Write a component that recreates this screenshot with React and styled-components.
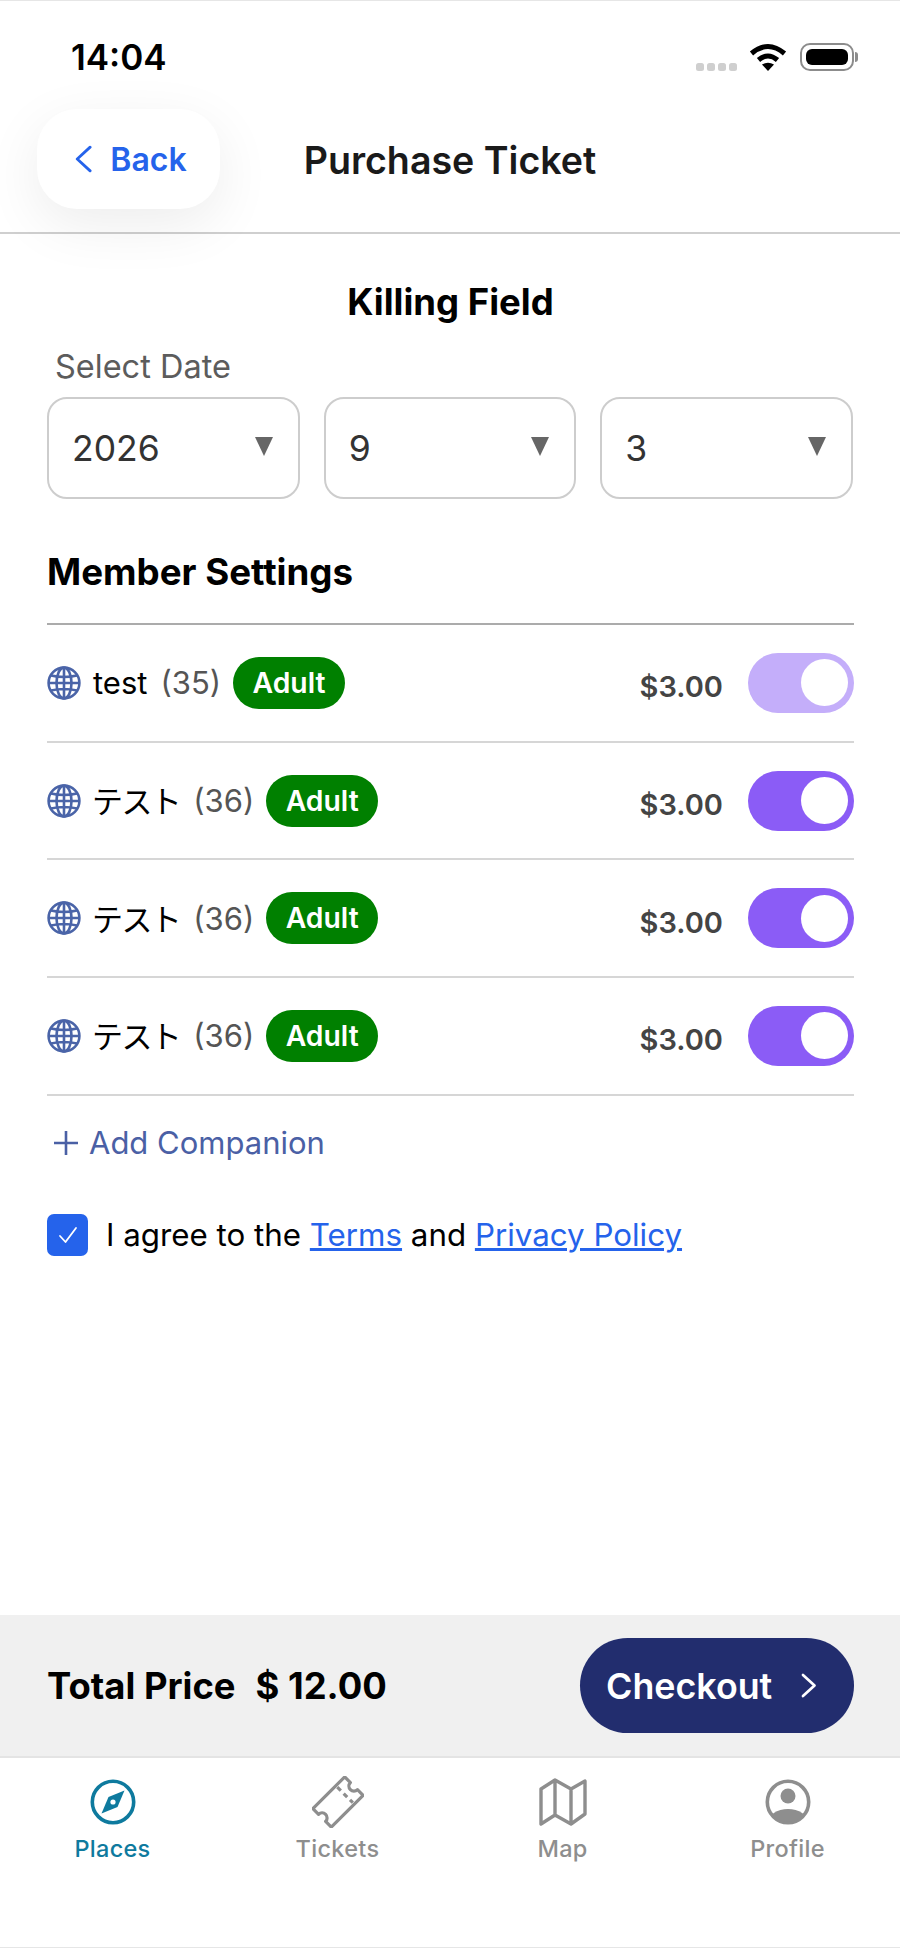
import React from "react";
import styled, { createGlobalStyle } from "styled-components";

const members = [
  { name: "test", age: 35, dimmed: true },
  { name: "テスト", age: 36, cjk: true },
  { name: "テスト", age: 36, cjk: true },
  { name: "テスト", age: 36, cjk: true },
];

const GlobalStyle = createGlobalStyle`
  * { box-sizing: border-box; }
  body {
    margin: 0;
    background: #fff;
    font-family: "Inter", "Noto Sans CJK JP", sans-serif;
  }
`;

const Screen = styled.div`
  width: 900px;
  height: 1948px;
  display: flex;
  flex-direction: column;
  background: #fff;
  border-top: 1px solid #e6e6e6;
  border-bottom: 1px solid #e6e6e6;
  overflow: hidden;
`;

// ---------- status bar ----------
const StatusBar = styled.div`
  height: 106px;
  flex-shrink: 0;
  display: flex;
  justify-content: space-between;
  padding: 36px 46px 0 71px;
`;
const Time = styled.div`
  font-size: 35px;
  line-height: 40px;
  font-weight: 600;
  color: #000;
`;
const StatusIcons = styled.div`
  display: flex;
  align-items: flex-start;
  padding-top: 6px;
`;
const Dots = styled.div`
  display: flex;
  gap: 3px;
  margin: 20px 12px 0 0;
`;
const Dot = styled.span`
  width: 8px;
  height: 8px;
  border-radius: 2.5px;
  background: #cfcfcf;
`;
const Battery = styled.div`
  position: relative;
  width: 54px;
  height: 28px;
  margin-left: 13px;
  padding: 4px;
  border: 2px solid #8c8c8c;
  border-radius: 10px;
  &::before {
    content: "";
    display: block;
    height: 100%;
    background: #000;
    border-radius: 6px;
  }
  &::after {
    content: "";
    position: absolute;
    right: -6px;
    top: 7px;
    width: 3px;
    height: 10px;
    background: #8c8c8c;
    border-radius: 0 3px 3px 0;
  }
`;

// ---------- header ----------
const Header = styled.header`
  height: 127px;
  flex-shrink: 0;
  display: grid;
  grid-template-columns: 1fr auto 1fr;
  align-items: start;
  padding: 2px 37px 0;
  border-bottom: 2px solid #cfcfcf;
`;
const BackButton = styled.div`
  width: 183px;
  height: 100px;
  display: flex;
  align-items: center;
  gap: 18px;
  padding-left: 38px;
  background: #fff;
  border-radius: 40px;
  box-shadow: 0 16px 56px rgba(0, 0, 0, 0.075);
  color: #2563eb;
  font-size: 32px;
  font-weight: 600;
`;
const Title = styled.h1`
  margin: 0;
  height: 100px;
  padding-top: 2px;
  display: flex;
  align-items: center;
  font-size: 37.6px;
  font-weight: 600;
  color: #1a1a1a;
`;

// ---------- form ----------
const Content = styled.main`
  flex: 1;
  padding: 46px 46px 0 47px;
`;
const PlaceName = styled.h2`
  margin: 0;
  text-align: center;
  font-size: 36.5px;
  line-height: 44px;
  font-weight: 700;
  color: #000;
`;
const FieldLabel = styled.div`
  margin: 23px 0 0 8px;
  font-size: 32.5px;
  line-height: 40px;
  color: #5c5c5c;
`;
const DateRow = styled.div`
  display: grid;
  grid-template-columns: repeat(3, 1fr);
  gap: 24px;
  margin-top: 10px;
  padding-right: 1px;
`;
const SelectBox = styled.div`
  height: 102px;
  display: flex;
  align-items: center;
  justify-content: space-between;
  padding: 0 25px 0 23px;
  border: 2px solid #cdcdcd;
  border-radius: 20px;
  font-size: 35.5px;
  color: #333;
`;
const SelectArrow = styled.span`
  width: 0;
  height: 0;
  border-left: 9px solid transparent;
  border-right: 9px solid transparent;
  border-top: 19px solid #666;
  margin-top: -3px;
`;
const SectionTitle = styled.h3`
  margin: 51px 0 0;
  padding-bottom: 29px;
  border-bottom: 2px solid #ababab;
  font-size: 36.7px;
  line-height: 44px;
  font-weight: 700;
  color: #000;
`;
const MemberRow = styled.div`
  height: 117.7px;
  display: flex;
  align-items: center;
  border-bottom: 2px solid #d6d6d6;
`;
const MemberInfo = styled.div`
  flex: 1;
  display: flex;
  align-items: center;
`;
const MemberName = styled.span`
  margin: ${(props) => (props.$cjk ? "-2px 0 0 11px" : "0 0 0 12px")};
  font-size: 31px;
  letter-spacing: ${(props) => (props.$cjk ? "-1.6px" : "0")};
  color: #000;
`;
const MemberAge = styled.span`
  margin-left: 13px;
  font-size: 31px;
  color: #555;
`;
const Badge = styled.span`
  margin-left: 12px;
  height: 52px;
  padding: 0 19.5px;
  display: flex;
  align-items: center;
  border-radius: 26px;
  background: #008000;
  color: #fff;
  font-size: 28.3px;
  font-weight: 600;
`;
const Price = styled.span`
  margin: 8px 25px 0 0;
  font-size: 29px;
  font-weight: 600;
  color: #444;
`;
const Toggle = styled.div`
  width: 106px;
  height: 60px;
  display: flex;
  align-items: center;
  justify-content: flex-end;
  padding-right: 6px;
  border-radius: 30px;
  background: ${(props) => (props.$dimmed ? "#c4aefa" : "#8b5cf6")};
  &::after {
    content: "";
    width: 47px;
    height: 47px;
    border-radius: 50%;
    background: #fff;
  }
`;
const AddCompanion = styled.div`
  display: flex;
  align-items: center;
  gap: 10px;
  margin: 27px 0 0 6px;
  font-size: 31px;
  line-height: 40px;
  color: #4a60a5;
`;
const AgreeRow = styled.div`
  display: flex;
  align-items: center;
  gap: 18px;
  margin-top: 51px;
  font-size: 31.3px;
  color: #000;
`;
const CheckBox = styled.span`
  width: 41px;
  height: 42px;
  display: flex;
  align-items: center;
  justify-content: center;
  border-radius: 7px;
  background: #2563eb;
`;
const TextLink = styled.a`
  color: #2563eb;
  text-decoration: underline;
`;

// ---------- footer ----------
const CheckoutBar = styled.div`
  height: 141px;
  flex-shrink: 0;
  display: flex;
  align-items: center;
  justify-content: space-between;
  padding: 0 46px 0 47px;
  background: #f0f0f0;
`;
const Total = styled.div`
  display: flex;
  gap: 20px;
  font-size: 36.4px;
  font-weight: 700;
  color: #000;
`;
const CheckoutButton = styled.div`
  width: 274px;
  height: 95px;
  display: flex;
  align-items: center;
  gap: 29px;
  padding-left: 26px;
  border-radius: 48px;
  background: #222d6e;
  color: #fff;
  font-size: 35.8px;
  font-weight: 600;
`;
const TabBar = styled.nav`
  height: 191px;
  flex-shrink: 0;
  display: grid;
  grid-template-columns: repeat(4, 1fr);
  padding-top: 18px;
  border-top: 2px solid #e4e4e4;
`;
const Tab = styled.div`
  display: flex;
  flex-direction: column;
  align-items: center;
  gap: 6px;
  font-size: 23.5px;
  line-height: 30px;
  font-weight: 500;
  letter-spacing: 0.3px;
  color: ${(props) => (props.$active ? "#0e7a9e" : "#8e8e8e")};
`;
const TabIcon = styled.svg`
  width: 52px;
  height: 52px;
  display: block;
`;

const Wifi = () => (
  <svg width="38" height="28" viewBox="0 0 38 28">
    <path d="M2.5 10.5Q19 -3.5 35.5 10.5" fill="none" stroke="#000" strokeWidth="5" />
    <path d="M9.5 17Q19 9 28.5 17" fill="none" stroke="#000" strokeWidth="5" />
    <path d="M13 21.5Q19 18 25 21.5L19 28Z" fill="#000" />
  </svg>
);

const Globe = () => (
  <svg width="34" height="34" viewBox="0 0 34 34" fill="none" stroke="#4a64a8" strokeWidth="2.6">
    <circle cx="17" cy="17" r="15.4" />
    <ellipse cx="17" cy="17" rx="7.5" ry="15.4" />
    <path d="M17 1.6V32.4M1.6 17H32.4M4 9.5Q17 12.5 30 9.5M4 24.5Q17 21.5 30 24.5" />
  </svg>
);

const Chevron = ({ dir, size, color, width }) => (
  <svg width={size * 0.62} height={size} viewBox="0 0 16 26" fill="none" stroke={color} strokeWidth={width} strokeLinecap="round" strokeLinejoin="round">
    <path d={dir === "left" ? "M14 2L2 13L14 24" : "M2 2L14 13L2 24"} />
  </svg>
);

const Plus = () => (
  <svg width="26" height="26" viewBox="0 0 26 26" stroke="#4a60a5" strokeWidth="2.6">
    <path d="M13 1V25M1 13H25" />
  </svg>
);

const Check = () => (
  <svg width="20" height="20" viewBox="0 0 20 20" fill="none" stroke="#fff" strokeWidth="1.8" strokeLinecap="round" strokeLinejoin="round">
    <path d="M2 11L7.5 17L18 3" />
  </svg>
);

const CompassIcon = () => (
  <TabIcon viewBox="0 0 52 52">
    <circle cx="26" cy="26" r="20.7" fill="none" stroke="#0e7a9e" strokeWidth="3.6" />
    <path d="M37.5 14.5L30.5 31L14.5 37.5L21.5 21Z" fill="#0e7a9e" />
    <circle cx="26" cy="26" r="2.6" fill="#fff" />
  </TabIcon>
);

const TicketIcon = () => (
  <TabIcon viewBox="0 0 52 52">
    <g transform="rotate(-45 26 26)" fill="none" stroke="#8e8e8e" strokeWidth="3.2" strokeLinejoin="round">
      <path d="M3.5 13H48.5V21A5 5 0 0 0 48.5 31V39H3.5V31A5 5 0 0 0 3.5 21Z" />
      <path d="M36 15V37" strokeDasharray="5 4" />
    </g>
  </TabIcon>
);

const MapIcon = () => (
  <TabIcon viewBox="0 0 52 52">
    <path
      d="M4 13L18 4L34 13L48 5V38L34 48L18 39L4 48ZM18 4V39M34 13V48"
      fill="none"
      stroke="#8e8e8e"
      strokeWidth="3.4"
      strokeLinejoin="round"
    />
  </TabIcon>
);

const ProfileIcon = () => (
  <TabIcon viewBox="0 0 52 52">
    <clipPath id="profile-clip">
      <circle cx="26" cy="26" r="20" />
    </clipPath>
    <circle cx="26" cy="26" r="20.7" fill="none" stroke="#8e8e8e" strokeWidth="3.6" />
    <circle cx="26" cy="20" r="7.5" fill="#8e8e8e" />
    <ellipse cx="26" cy="47" rx="20" ry="14" fill="#8e8e8e" clipPath="url(#profile-clip)" />
  </TabIcon>
);

function Member({ name, age, dimmed, cjk }) {
  return (
    <MemberRow>
      <MemberInfo>
        <Globe />
        <MemberName $cjk={cjk}>{name}</MemberName>
        <MemberAge>({age})</MemberAge>
        <Badge>Adult</Badge>
      </MemberInfo>
      <Price>$3.00</Price>
      <Toggle $dimmed={dimmed} />
    </MemberRow>
  );
}

export default function App() {
  return (
    <Screen>
      <GlobalStyle />
      <StatusBar>
        <Time>14:04</Time>
        <StatusIcons>
          <Dots>
            <Dot />
            <Dot />
            <Dot />
            <Dot />
          </Dots>
          <Wifi />
          <Battery />
        </StatusIcons>
      </StatusBar>
      <Header>
        <BackButton>
          <Chevron dir="left" size={28} color="#2563eb" width={2.6} />
          Back
        </BackButton>
        <Title>Purchase Ticket</Title>
      </Header>
      <Content>
        <PlaceName>Killing Field</PlaceName>
        <FieldLabel>Select Date</FieldLabel>
        <DateRow>
          {["2026", "9", "3"].map((value) => (
            <SelectBox key={value}>
              {value}
              <SelectArrow />
            </SelectBox>
          ))}
        </DateRow>
        <SectionTitle>Member Settings</SectionTitle>
        {members.map((member, i) => (
          <Member key={i} {...member} />
        ))}
        <AddCompanion>
          <Plus />
          Add Companion
        </AddCompanion>
        <AgreeRow>
          <CheckBox>
            <Check />
          </CheckBox>
          <span>
            I agree to the <TextLink>Terms</TextLink> and <TextLink>Privacy Policy</TextLink>
          </span>
        </AgreeRow>
      </Content>
      <CheckoutBar>
        <Total>
          <span>Total Price</span>
          <span>$ 12.00</span>
        </Total>
        <CheckoutButton>
          Checkout
          <Chevron dir="right" size={25} color="#fff" width={2.8} />
        </CheckoutButton>
      </CheckoutBar>
      <TabBar>
        <Tab $active>
          <CompassIcon />
          Places
        </Tab>
        <Tab>
          <TicketIcon />
          Tickets
        </Tab>
        <Tab>
          <MapIcon />
          Map
        </Tab>
        <Tab>
          <ProfileIcon />
          Profile
        </Tab>
      </TabBar>
    </Screen>
  );
}
